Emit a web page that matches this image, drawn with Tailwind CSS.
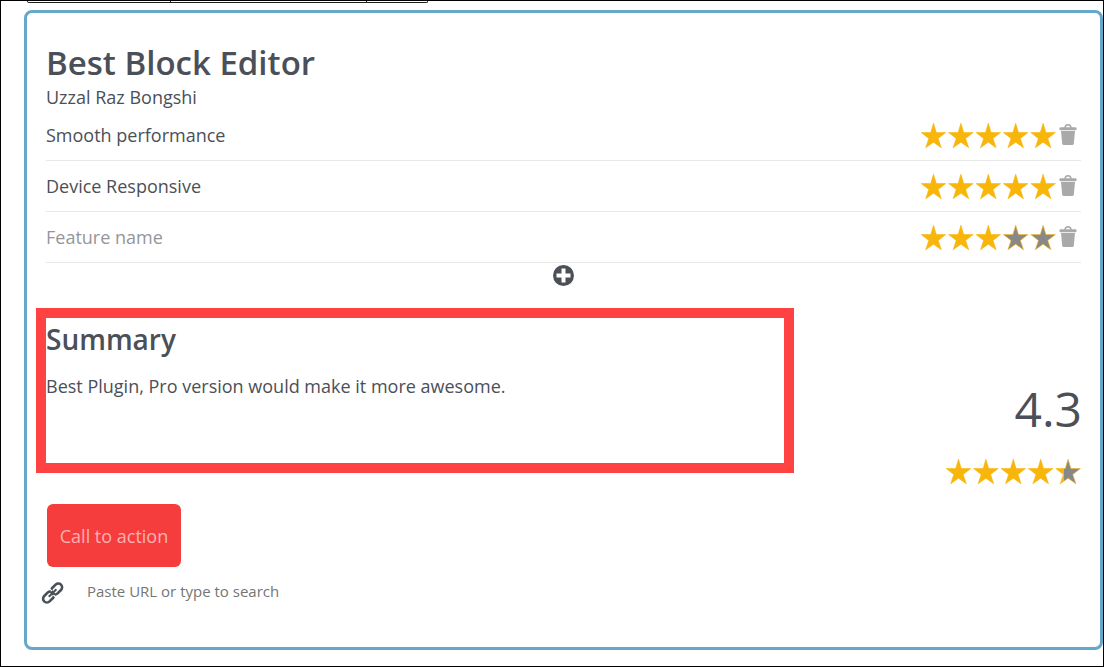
<!DOCTYPE html>
<html lang="en">
<head>
  <meta charset="UTF-8" />
  <meta name="viewport" content="width=device-width, initial-scale=1.0" />
  <title>Best Block Editor</title>
  <script src="https://cdn.jsdelivr.net/npm/@tailwindcss/browser@4"></script>
</head>
<body class="min-h-screen flex flex-col border border-black bg-white font-['Open_Sans',sans-serif] text-lg text-[#4b4f58]">

  <!-- Shared icons -->
  <svg class="absolute size-0" aria-hidden="true">
    <defs>
      <linearGradient id="partial">
        <stop offset="34%" stop-color="#f8b60a" />
        <stop offset="34%" stop-color="#888" />
      </linearGradient>
      <path id="star" d="M13.5 1.2 16.3 10.6H25.8L18.2 16.4 21.3 25.8 13.5 20.2 5.7 25.8 8.8 16.4 1.2 10.6H10.7Z" stroke="#f8b60a" stroke-width="0.6" />
      <g id="five-stars">
        <use href="#star" fill="#f8b60a" />
        <use href="#star" x="27.4" fill="#f8b60a" />
        <use href="#star" x="54.8" fill="#f8b60a" />
        <use href="#star" x="82.2" fill="#f8b60a" />
        <use href="#star" x="109.6" fill="#f8b60a" />
      </g>
      <g id="trash" fill="#a9a9a9">
        <path d="M8 5C8 2.600 9.500 1.800 11 1.800S14 2.600 14 5" fill="none" stroke="#a9a9a9" stroke-width="1.400" />
        <rect x="2.500" y="4.200" width="17" height="3" rx="1" />
        <path d="M4 8H18L16.800 20.500Q16.600 22 15.200 22H6.800Q5.400 22 5.200 20.500Z" />
      </g>
    </defs>
  </svg>

  <!-- Block toolbar, lower edge -->
  <div class="ml-[26px] flex h-[2px] w-[401px] rounded-b-xs border border-t-0 border-[#1e1e1e]">
    <div class="w-[143px] border-r border-[#1e1e1e]"></div>
    <div class="w-[196px] border-r border-[#1e1e1e]"></div>
  </div>

  <main class="mt-[7px] mr-0 mb-4 ml-[23px] flex-1 rounded-lg border-3 border-[#66a8c9] pt-7 pr-[18px] pl-[19px]">
    <h1 class="text-[33px] leading-[44px] font-semibold">Best Block Editor</h1>
    <p class="leading-[25px]">Uzzal Raz Bongshi</p>

    <ul class="mr-px">
      <li class="flex h-[51px] items-center justify-between border-b border-[#e8e8e8]">
        <span>Smooth performance</span>
        <div class="flex items-center">
          <svg class="h-[27px] w-[137px]" viewBox="0 0 137 27" role="img" aria-label="5 of 5"><use href="#five-stars" /></svg>
          <button type="button" aria-label="Delete"><svg class="size-6" viewBox="0 0 24 24"><use href="#trash" /></svg></button>
        </div>
      </li>
      <li class="flex h-[51px] items-center justify-between border-b border-[#e8e8e8]">
        <span>Device Responsive</span>
        <div class="flex items-center">
          <svg class="h-[27px] w-[137px]" viewBox="0 0 137 27" role="img" aria-label="5 of 5"><use href="#five-stars" /></svg>
          <button type="button" aria-label="Delete"><svg class="size-6" viewBox="0 0 24 24"><use href="#trash" /></svg></button>
        </div>
      </li>
      <li class="flex h-[51px] items-center justify-between border-b border-[#e8e8e8]">
        <input type="text" aria-label="Feature name" placeholder="Feature name" class="placeholder:text-[#94969b]" />
        <div class="flex items-center">
          <svg class="h-[27px] w-[137px]" viewBox="0 0 137 27" role="img" aria-label="3 of 5">
            <use href="#star" fill="#f8b60a" />
            <use href="#star" x="27.4" fill="#f8b60a" />
            <use href="#star" x="54.8" fill="#f8b60a" />
            <use href="#star" x="82.2" fill="#888" />
            <use href="#star" x="109.6" fill="#888" />
          </svg>
          <button type="button" aria-label="Delete"><svg class="size-6" viewBox="0 0 24 24"><use href="#trash" /></svg></button>
        </div>
      </li>
    </ul>

    <button type="button" aria-label="Add feature" class="mx-auto block">
      <svg class="size-[26px]" viewBox="0 0 26 26">
        <circle cx="12.500" cy="12.500" r="10.500" fill="#4b4f58" />
        <path d="M10.500 5.500h4v5h5v4h-5v5h-4v-5h-5v-4h5Z" fill="#fff" />
      </svg>
    </button>

    <div class="mt-[19px] -ml-[10px] flex items-start justify-between">
      <section class="h-[165px] w-[758px] border-10 border-[#ff4242]">
        <h2 class="text-[28px] leading-[42px] font-semibold">Summary</h2>
        <p class="mt-3 leading-7">Best Plugin, Pro version would make it more awesome.</p>
      </section>
      <div class="flex flex-col items-end pt-[66px]">
        <span class="text-5xl leading-[70px]">4.3</span>
        <svg class="mt-[14px] h-[27px] w-[137px]" viewBox="0 0 137 27" role="img" aria-label="4.3 of 5">
          <use href="#star" fill="#f8b60a" />
          <use href="#star" x="27.4" fill="#f8b60a" />
          <use href="#star" x="54.8" fill="#f8b60a" />
          <use href="#star" x="82.2" fill="#f8b60a" />
          <use href="#star" x="109.6" fill="url(#partial)" />
        </svg>
      </div>
    </div>

    <button type="button" class="mt-[19px] ml-px h-[63px] w-[134px] rounded-md bg-[#f63d3d] text-[#fbb1b1]">Call to action</button>

    <label class="mt-[13px] -ml-[5px] flex items-center gap-[22px]">
      <svg class="size-6" viewBox="0 0 24 24" fill="none" stroke-width="2.600">
        <g stroke="#4b4f58">
          <rect x="-6.200" y="-3.800" width="12.400" height="7.600" rx="3.800" transform="translate(15.600 9) rotate(-45)" />
          <rect x="-6.200" y="-3.800" width="12.400" height="7.600" rx="3.800" transform="translate(7.600 17) rotate(-45)" />
        </g>
        <!-- gaps where the two links cross -->
        <path d="M8.600 8.800 11 11.200M12.400 15 14.800 17.400" stroke="#fff" stroke-width="1.200" />
        <path d="M7.800 16.800 15.400 9.200" stroke="#4b4f58" stroke-width="2" />
      </svg>
      <input type="text" placeholder="Paste URL or type to search" class="w-[300px] text-[15px] placeholder:text-[#757575]" />
    </label>
  </main>
</body>
</html>
